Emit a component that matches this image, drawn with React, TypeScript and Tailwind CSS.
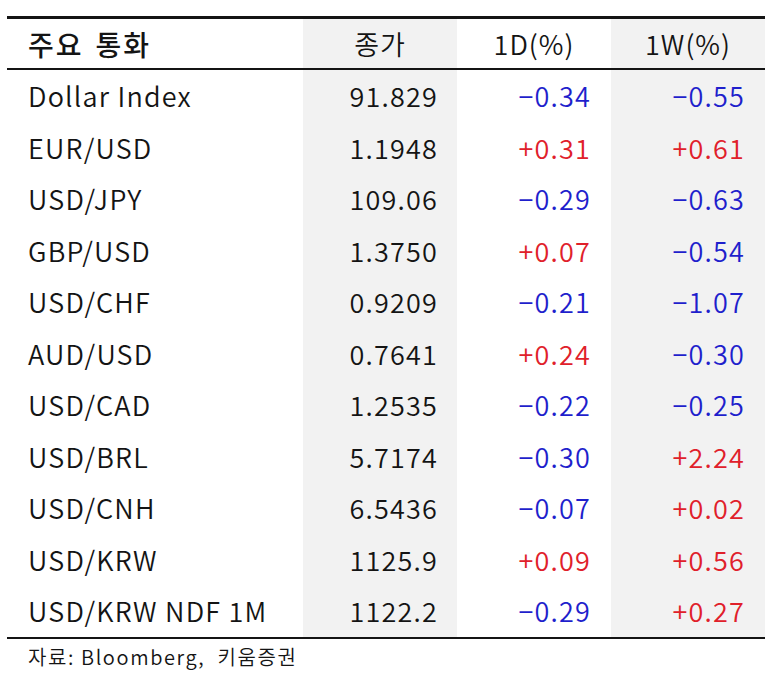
import React from "react";

type Row = { name: string; close: string; d: string; w: string };

const rows: Row[] = [
  { name: "Dollar Index", close: "91.829", d: "−0.34", w: "−0.55" },
  { name: "EUR/USD", close: "1.1948", d: "+0.31", w: "+0.61" },
  { name: "USD/JPY", close: "109.06", d: "−0.29", w: "−0.63" },
  { name: "GBP/USD", close: "1.3750", d: "+0.07", w: "−0.54" },
  { name: "USD/CHF", close: "0.9209", d: "−0.21", w: "−1.07" },
  { name: "AUD/USD", close: "0.7641", d: "+0.24", w: "−0.30" },
  { name: "USD/CAD", close: "1.2535", d: "−0.22", w: "−0.25" },
  { name: "USD/BRL", close: "5.7174", d: "−0.30", w: "+2.24" },
  { name: "USD/CNH", close: "6.5436", d: "−0.07", w: "+0.02" },
  { name: "USD/KRW", close: "1125.9", d: "+0.09", w: "+0.56" },
  { name: "USD/KRW NDF 1M", close: "1122.2", d: "−0.29", w: "+0.27" },
];

const color = (v: string) => (v.startsWith("+") ? "text-[#e0202a]" : "text-[#1f1fcc]");

export default function App() {
  return (
    <div
      className="w-[773px] h-[682px] bg-white text-[#141414]"
      style={{ fontFamily: '"Noto Sans CJK KR", "Noto Sans", sans-serif' }}
    >
      <div className="pt-[16px] px-[7px]">
        <div className="w-[758px] border-t-[3px] border-[#141414]">
          <div className="grid grid-cols-[296px_154px_154px_154px] h-[51px] border-b-2 border-[#141414] text-[27px] leading-none tracking-[1px]">
            <div className="flex items-center pl-[21px] font-medium text-[28px] tracking-[2px] gap-[12px]">
              <span>주요</span>
              <span>통화</span>
            </div>
            <div className="flex items-center justify-center bg-[#f2f2f2] font-[350]">종가</div>
            <div className="flex items-center justify-center font-[350]">1D(%)</div>
            <div className="flex items-center justify-center bg-[#f2f2f2] font-[350]">1W(%)</div>
          </div>
          <div className="border-b-2 border-[#141414]">
            {rows.map((r) => (
              <div
                key={r.name}
                className="grid grid-cols-[296px_154px_154px_154px] h-[51.5px] text-[27px] leading-none tracking-[1.2px] font-[350]"
              >
                <div className="flex items-center pl-[21px]">{r.name}</div>
                <div className="flex items-center justify-end pr-[19px] bg-[#f2f2f2]">{r.close}</div>
                <div className={`flex items-center justify-end pr-[20px] ${color(r.d)}`}>{r.d}</div>
                <div className={`flex items-center justify-end pr-[20px] bg-[#f2f2f2] ${color(r.w)}`}>{r.w}</div>
              </div>
            ))}
          </div>
          <div className="pl-[21px] pt-[8px] text-[20px] leading-none tracking-[1.6px] font-[350]">
            자료: Bloomberg, &nbsp;키움증권
          </div>
        </div>
      </div>
    </div>
  );
}
